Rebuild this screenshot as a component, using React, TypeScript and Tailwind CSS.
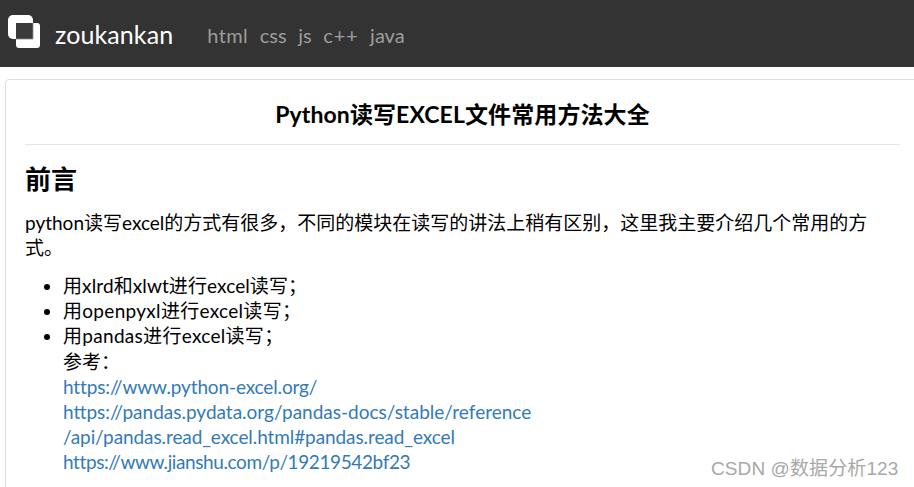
const font = { fontFamily: 'Lato, "Noto Sans CJK SC", sans-serif' };

export default function App() {
  return (
    <div className="relative h-[487px] w-[914px] overflow-hidden bg-white text-black" style={font}>
      <nav className="flex h-[67px] items-center bg-[#333333] pl-[8px]">
        <svg width="32" height="33" viewBox="0 0 32 33" className="mb-[5px]">
          <rect x="8" y="8" width="24" height="25" rx="3" fill="#fff" />
          <rect x="0" y="0" width="25" height="24" rx="5" fill="#fff" />
          <rect x="8" y="8" width="17" height="16" fill="#3a3a3a" />
          <path d="M25 8V24H8" fill="none" stroke="#8a8a8a" strokeWidth="0.8" />
        </svg>
        <span className="ml-[15px] pt-[2px] text-[25px] leading-none tracking-[0.1px] text-white">zoukankan</span>
        <div className="ml-[34px] flex gap-[11.6px] pt-[2px] text-[20px] leading-none text-[#9d9d9d]">
          <span className="tracking-[0.4px]">html</span>
          <span>css</span>
          <span>js</span>
          <span className="tracking-[0.8px]">c++</span>
          <span>java</span>
        </div>
      </nav>
      <main className="ml-[5px] mt-[12px] h-[420px] w-[915px] rounded-[4px] border border-[#dddddd] px-[19px]">
        <h1 className="flex h-[65px] items-center justify-center border-b border-[#e5e5e5] pt-[5px] text-[23px] font-bold tracking-[0.1px]">
          Python读写EXCEL文件常用方法大全
        </h1>
        <h2 className="mt-[15px] text-[26px] font-bold leading-[38px]">前言</h2>
        <p className="mt-[12px] w-[850px] text-[19px] leading-[25px]">
          python读写excel的方式有很多，不同的模块在读写的讲法上稍有区别，这里我主要介绍几个常用的方式。
        </p>
        <ul className="ml-[38px] mt-[13px] list-disc text-[19px] leading-[25.2px]">
          <li className="tracking-[0.1px]">用xlrd和xlwt进行excel读写；</li>
          <li className="tracking-[0.3px]">用openpyxl进行excel读写；</li>
          <li>
            <span className="tracking-[0.3px]">用pandas进行excel读写；</span>
            <br />
            参考：
            <br />
            <a className="tracking-[-0.14px] text-[#337ab7]">https://www.python-excel.org/</a>
            <br />
            <a className="text-[#337ab7]">https://pandas.pydata.org/pandas-docs/stable/reference</a>
            <br />
            <a className="tracking-[-0.09px] text-[#337ab7]">/api/pandas.read_excel.html#pandas.read_excel</a>
            <br />
            <a className="tracking-[-0.4px] text-[#337ab7]">https://www.jianshu.com/p/19219542bf23</a>
          </li>
        </ul>
      </main>
      <div className="absolute left-[711px] top-[458px] text-[19px] leading-[22px] tracking-[0.1px] text-[#a8a8a8]" style={{ fontFamily: '"Liberation Sans", "Noto Sans CJK SC", sans-serif' }}>
        CSDN @数据分析123
      </div>
    </div>
  );
}
